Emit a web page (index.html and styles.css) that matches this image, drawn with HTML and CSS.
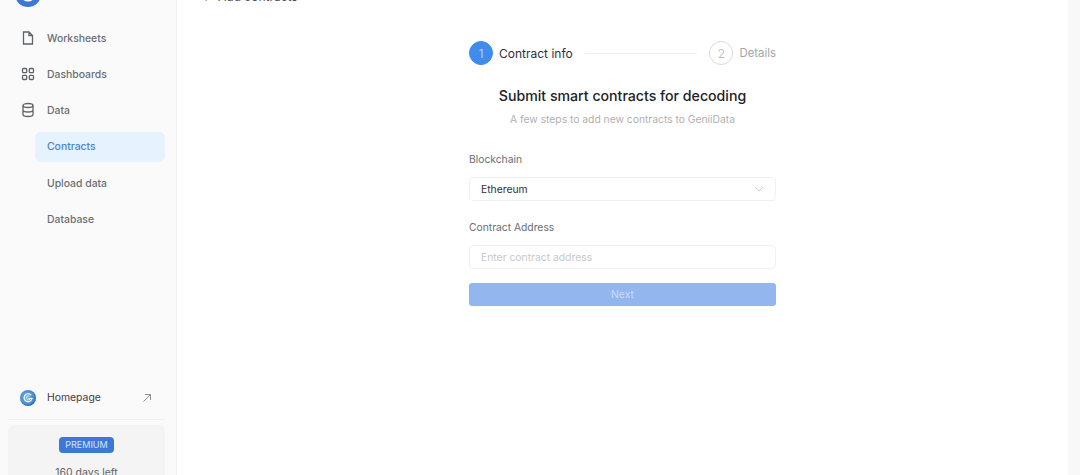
FILE: index.html
```html
<!DOCTYPE html>
<html lang="en">
<head>
<meta charset="utf-8">
<title>Add contracts</title>
<link rel="stylesheet" href="styles.css">
</head>
<body>
<div class="app">
  <aside class="sidebar">
    <div class="brand">
      <svg class="brand-logo" viewBox="0 0 24 24" width="26" height="26"><circle cx="12" cy="12" r="12" fill="#3b78d8"/><circle cx="12" cy="12" r="7" fill="#fff"/><path d="M8 15l8-7" stroke="#3b8fe0" stroke-width="3" fill="none"/></svg>
      <span class="brand-name">GeniiData</span>
    </div>
    <nav class="nav">
      <a class="nav-item">
        <svg class="nav-icon" viewBox="0 0 16 16"><path d="M3.500 2h5.500l3.500 3.500v8.500h-9z M9 2v3.500h3.500"/></svg>
        <span>Worksheets</span>
      </a>
      <a class="nav-item">
        <svg class="nav-icon" viewBox="0 0 16 16"><rect x="2.500" y="2.500" width="4.200" height="4.200" rx="1"/><rect x="9.300" y="2.500" width="4.200" height="4.200" rx="1"/><rect x="2.500" y="9.300" width="4.200" height="4.200" rx="1"/><rect x="9.300" y="9.300" width="4.200" height="4.200" rx="1"/></svg>
        <span>Dashboards</span>
      </a>
      <a class="nav-item">
        <svg class="nav-icon" viewBox="0 0 16 16"><ellipse cx="8" cy="3.500" rx="5" ry="2"/><path d="M3 3.500v9c0 1.100 2.200 2 5 2s5-.9 5-2v-9M3 8c0 1.100 2.200 2 5 2s5-.9 5-2"/></svg>
        <span>Data</span>
      </a>
      <a class="nav-item sub active"><span>Contracts</span></a>
      <a class="nav-item sub"><span>Upload data</span></a>
      <a class="nav-item sub"><span>Database</span></a>
    </nav>
    <div class="side-bottom">
      <a class="home-link">
        <svg class="home-logo" viewBox="0 0 16 16" width="16" height="16"><defs><radialGradient id="hg" cx=".45" cy=".45" r=".6"><stop offset="0" stop-color="#6fb7e6"/><stop offset=".7" stop-color="#4b8fd0"/><stop offset="1" stop-color="#27508f"/></radialGradient></defs><circle cx="8" cy="8" r="8" fill="url(#hg)"/><path d="M11 5A4 4 0 1 0 12 8.500H8.500" fill="none" stroke="#fff" stroke-width="1.200"/><path d="M9.500 6.300A2 2 0 1 0 10 9" fill="none" stroke="#fff" stroke-width=".8"/></svg>
        <span class="home-text">Homepage</span>
        <svg class="home-arrow" viewBox="0 0 10 10" width="10" height="10"><path d="M1.500 8.500l7-7M3 1.500h5.500V7"/></svg>
      </a>
      <div class="plan">
        <span class="badge">PREMIUM</span>
        <p class="days">160 days left</p>
      </div>
    </div>
  </aside>
  <main class="main">
    <div class="crumb"><span class="crumb-arrow">←</span><span>Add contracts</span></div>
    <section class="wizard">
      <div class="steps">
        <span class="step-num current">1</span>
        <span class="step-label current">Contract info</span>
        <span class="step-line"></span>
        <span class="step-num">2</span>
        <span class="step-label">Details</span>
      </div>
      <h1 class="title">Submit smart contracts for decoding</h1>
      <p class="subtitle">A few steps to add new contracts to GeniiData</p>
      <label class="field-label first">Blockchain</label>
      <div class="control select">
        <span>Ethereum</span>
        <svg class="chev" viewBox="0 0 10 6" width="10" height="6"><path d="M1 1l4 4 4-4"/></svg>
      </div>
      <label class="field-label">Contract Address</label>
      <div class="control placeholder">Enter contract address</div>
      <button class="next" type="button">Next</button>
    </section>
  </main>
  <div class="scrollbar"></div>
</div>
</body>
</html>
```

FILE: styles.css
```css
* { box-sizing: border-box; }
html, body { margin: 0; height: 475px; overflow: hidden; background: #fff; }
body { font-family: Inter, "Liberation Sans", sans-serif; font-size: 10.400px; color: #5f6368; }
p, h1 { margin: 0; }

.app { display: flex; height: 516px; margin-top: -16px; }

.sidebar { width: 177px; flex: none; display: flex; flex-direction: column; background: #fafafa; border-right: 1px solid #f0f0f0; padding: 0 11px 0 8px; }
.brand { display: flex; align-items: center; gap: 8px; height: 26px; margin: -3px 0 0 7px; }
.brand-name { font-size: 12px; color: #e8e8e8; }
.nav { display: flex; flex-direction: column; margin-top: 13px; }
.nav-item { display: flex; align-items: center; gap: 11px; height: 36.200px; padding-left: 12px; color: #6a6e72; font-weight: 500; }
.nav-icon { width: 16px; height: 16px; fill: none; stroke: #5f6368; stroke-width: 1.300; flex: none; }
.sub { margin-left: 27px; padding-left: 12px; }
.active { color: #4a84c6; background: #e6f2fd; border-radius: 6px; height: 30px; margin-top: 3px; margin-bottom: 4px; }

.side-bottom { margin-top: auto; }
.home-link { display: flex; align-items: center; gap: 11px; height: 44px; padding: 0 5px 0 12px; border-bottom: 1px solid #f0f0f0; color: #3c4043; }
.home-text { flex: 1; }
.home-logo { flex: none; }
.home-arrow { fill: none; stroke: #8b8f93; stroke-width: 1; margin-right: 8px; }
.plan { margin-top: 5px; height: 75px; background: #f4f4f4; border-radius: 6px; padding-top: 12px; display: flex; flex-direction: column; align-items: center; }
.badge { background: #3b78d8; color: #d6e4f8; font-size: 9px; border-radius: 4px; height: 16px; line-height: 16px; padding: 0 6px; }
.days { margin-top: 13px; color: #5f6368; font-size: 10.500px; }

.main { flex: 1; min-width: 0; background: #fff; }
.crumb { display: flex; height: 16px; line-height: 16px; margin: 5px 0 0 25px; color: #4f5357; font-size: 12px; }
.crumb-arrow { width: 16px; font-size: 10px; }

.wizard { width: 307px; margin: 36px auto 0; display: flex; flex-direction: column; }
.steps { display: flex; align-items: center; height: 24px; }
.step-num { width: 24px; height: 24px; border-radius: 50%; border: 1px solid #dcdcdc; color: #b4b4b4; display: flex; align-items: center; justify-content: center; font-size: 12px; flex: none; font-weight: 300; }
.step-num.current { background: #3f8cec; border-color: #3f8cec; color: #cfe3fb; }
.step-label { margin-left: 6px; font-size: 11.400px; line-height: 15px; padding-top: 1px; color: #a6a6a6; }
.step-label.current { font-size: 12px; padding-top: 0; color: #2e3135; }
.step-line { flex: 1; height: 1px; background: #f0f0f0; margin: 0 12px; }
.title { margin-top: 20px; text-align: center; font-size: 14.150px; line-height: 22px; font-weight: 500; color: #202225; }
.subtitle { margin-top: 4.500px; text-align: center; font-size: 10.300px; line-height: 14px; color: #b0b0b0; }
.field-label { display: block; font-size: 10.300px; line-height: 16px; color: #6a6e72; margin-top: 18px; }
.field-label.first { margin-top: 25.500px; }
.control { height: 24px; margin-top: 10px; border: 1px solid #f0f0f0; border-radius: 4px; padding: 0 11px; display: flex; align-items: center; justify-content: space-between; font-size: 10.350px; background: #fff; }
.select { color: #2e3135; }
.placeholder { color: #c8c8c8; }
.chev { fill: none; stroke: #d0d0d0; stroke-width: 1; }
.next { margin-top: 14px; height: 23px; width: 100%; border: 0; padding: 0 0 2px; border-radius: 3px; background: #94b6ee; color: #c9dbf7; font: inherit; font-size: 10.350px; }

.scrollbar { width: 12px; flex: none; background: #f8f8f8; }
```
